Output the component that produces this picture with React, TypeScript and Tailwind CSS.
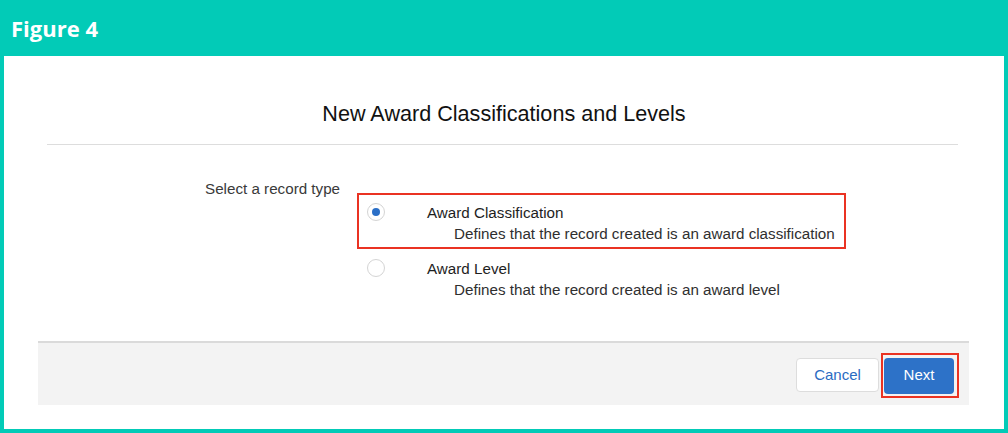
import React from "react";

function Radio({ checked }: { checked?: boolean }) {
  return (
    <span className="flex h-[18px] w-[18px] shrink-0 items-center justify-center rounded-full border border-[#d4d4d4] bg-white">
      {checked && <span className="h-[8px] w-[8px] rounded-full bg-[#2b6fc7]" />}
    </span>
  );
}

function Option({ checked, title, desc, boxed }: { checked?: boolean; title: string; desc: string; boxed?: boolean }) {
  return (
    <div
      className={
        "flex w-[489px] border-2 pb-[3px] pl-[8px] pt-[7px] " +
        (boxed ? "border-[#ea3323]" : "border-transparent")
      }
    >
      <div className="pt-[1px]">
        <Radio checked={checked} />
      </div>
      <div className="ml-[42px] text-[15.2px] leading-[21px]">
        <div className="text-[#1e1e1e]">{title}</div>
        <div className="pl-[27px] text-[#2f2f2f]">{desc}</div>
      </div>
    </div>
  );
}

export default function App() {
  return (
    <div
      className="flex h-[433px] w-[1008px] flex-col bg-[#02cbb7]"
      style={{ fontFamily: '"Liberation Sans", Arial, sans-serif' }}
    >
      <div className="flex h-[56px] items-center pl-[11px] pb-[1px]">
        <span
          className="text-[22px] font-bold leading-none text-white"
          style={{ fontFamily: '"Open Sans", "Noto Sans", sans-serif' }}
        >
          Figure 4
        </span>
      </div>
      <div className="mx-[4px] mb-[4px] flex flex-1 flex-col bg-white">
        <div className="pt-[45px] text-center text-[21.6px] leading-[26px] text-[#111111]">
          New Award Classifications and Levels
        </div>
        <div className="ml-[43px] mr-[46px] mt-[17px] h-px bg-[#dddddd]" />
        <div className="mt-[34px] flex pl-[201px]">
          <div className="w-[152px] text-[15.2px] leading-[20px] text-[#3a3a3a]">Select a record type</div>
          <div className="mt-[14px] flex flex-col">
            <Option boxed checked title="Award Classification" desc="Defines that the record created is an award classification" />
            <Option title="Award Level" desc="Defines that the record created is an award level" />
          </div>
        </div>
        <div className="ml-[34px] mr-[35px] mt-[36px] flex h-[64px] items-center justify-end border-t-2 border-[#dadada] bg-[#f3f3f3] pr-[10px] pt-[2px]">
          <button className="flex h-[34px] w-[83px] items-center justify-center rounded-[4px] border border-[#dddddd] bg-white text-[15px] text-[#2a6bc2]">
            Cancel
          </button>
          <div className="ml-[2px] flex h-[45px] w-[78px] border-2 border-[#ea3323] pb-[2px] pl-[1px] pr-[3px] pt-[3px]">
            <button className="flex h-[36px] w-[70px] items-center justify-center rounded-[4px] bg-[#2d72c8] text-[15px] text-white">
              Next
            </button>
          </div>
        </div>
      </div>
    </div>
  );
}
